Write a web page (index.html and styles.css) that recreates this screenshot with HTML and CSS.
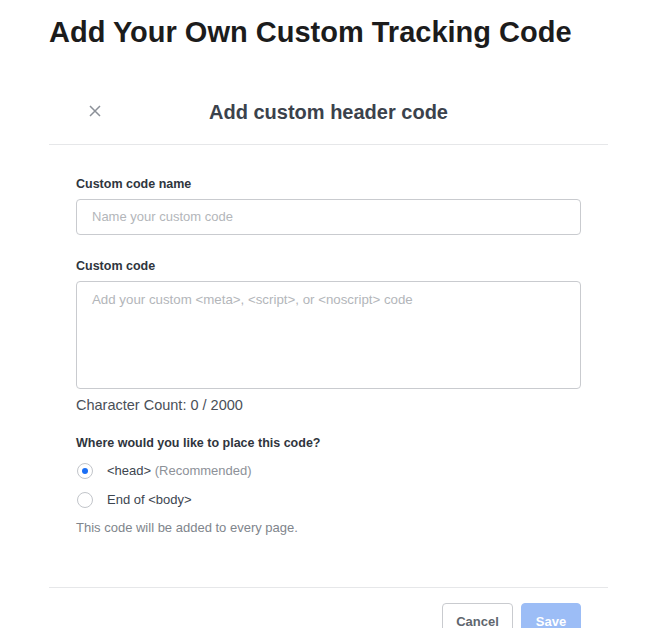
FILE: index.html
```html
<!DOCTYPE html>
<html>
<head>
<meta charset="utf-8">
<link rel="stylesheet" href="styles.css">
</head>
<body>
<div class="page">
  <h1 class="title">Add Your Own Custom Tracking Code</h1>
  <div class="modal">
    <div class="modal-header">
      <button class="close" aria-label="Close">
        <svg width="12" height="12" viewBox="0 0 12 12"><path d="M1 1L11 11M11 1L1 11" stroke="#8b9098" stroke-width="1.5" fill="none"/></svg>
      </button>
      <h2 class="modal-title">Add custom header code</h2>
    </div>
    <div class="modal-body">
      <label class="label">Custom code name</label>
      <div class="input">Name your custom code</div>
      <label class="label label-2">Custom code</label>
      <div class="textarea">Add your custom &lt;meta&gt;, &lt;script&gt;, or &lt;noscript&gt; code</div>
      <div class="count">Character Count: 0 / 2000</div>
      <div class="label label-3">Where would you like to place this code?</div>
      <div class="radio-group">
        <div class="radio-row"><span class="radio checked"></span><span class="radio-text">&lt;head&gt; <span class="muted">(Recommended)</span></span></div>
        <div class="radio-row"><span class="radio"></span><span class="radio-text">End of &lt;body&gt;</span></div>
      </div>
      <div class="hint">This code will be added to every page.</div>
    </div>
    <div class="modal-footer">
      <button class="btn btn-cancel">Cancel</button>
      <button class="btn btn-save">Save</button>
    </div>
  </div>
</div>
</body>
</html>
```
FILE: styles.css
```css
html, body { margin: 0; padding: 0; background: #fff; }
body { font-family: "Liberation Sans", Arial, sans-serif; color: #3d4550; overflow: hidden; height: 628px; }
.page { padding-left: 49px; width: 559px; }
.title { margin: 0; padding-top: 15px; font-size: 29px; line-height: 34px; font-weight: 700; color: #1c1c1c; }
.modal { margin-top: 60px; }
.modal-header { position: relative; height: 35px; border-bottom: 1px solid #e6e7e9; display: flex; justify-content: center; align-items: flex-start; }
.close { position: absolute; left: 39px; top: -5px; width: 14px; height: 14px; padding: 0; margin: 0; border: 0; background: none; display: flex; align-items: center; justify-content: center; }
.modal-title { margin: -9px 0 0; font-size: 20px; line-height: 24px; font-weight: 700; color: #3b424c; }
.modal-body { padding: 31px 27px 0; height: 442px; box-sizing: border-box; }
.label { display: block; font-size: 12.5px; font-weight: 700; color: #2f353d; line-height: 16px; }
.input { margin-top: 7px; height: 36px; box-sizing: border-box; border: 1px solid #c9cbcf; border-radius: 4px; padding: 0 15px; font-size: 13px; line-height: 34px; color: #b3b6ba; }
.label-2 { margin-top: 23px; }
.textarea { margin-top: 7px; height: 108px; box-sizing: border-box; border: 1px solid #c9cbcf; border-radius: 4px; padding: 9px 15px; font-size: 13.3px; line-height: 18px; color: #b3b6ba; }
.count { margin-top: 8px; font-size: 14.5px; line-height: 17px; color: #4a5058; }
.label-3 { margin-top: 21px; }
.radio-group { margin-top: 5px; }
.radio-row { display: flex; align-items: center; height: 29px; }
.radio { width: 16px; height: 16px; box-sizing: border-box; border: 1px solid #c2c5ca; border-radius: 50%; margin-left: 1px; margin-right: 14px; display: flex; align-items: center; justify-content: center; }
.radio.checked::after { content: ""; width: 6px; height: 6px; border-radius: 50%; background: #1a6ef5; }
.radio-text { font-size: 13px; color: #3d4550; }
.muted { color: #8d9198; }
.hint { margin-top: 6px; font-size: 13px; color: #80858c; line-height: 16px; }
.modal-footer { border-top: 1px solid #e6e7e9; padding: 15px 27px 0; display: flex; justify-content: flex-end; gap: 8px; }
.btn { height: 40px; border-radius: 4px; font-family: "Liberation Sans", Arial, sans-serif; font-size: 13px; font-weight: 700; padding: 0 0 4px; margin: 0; }
.btn-cancel { width: 71px; background: #fff; border: 1px solid #c9cbcf; color: #60666e; }
.btn-save { width: 60px; background: #9cbdf6; border: 1px solid #9cbdf6; color: #fff; }
```
